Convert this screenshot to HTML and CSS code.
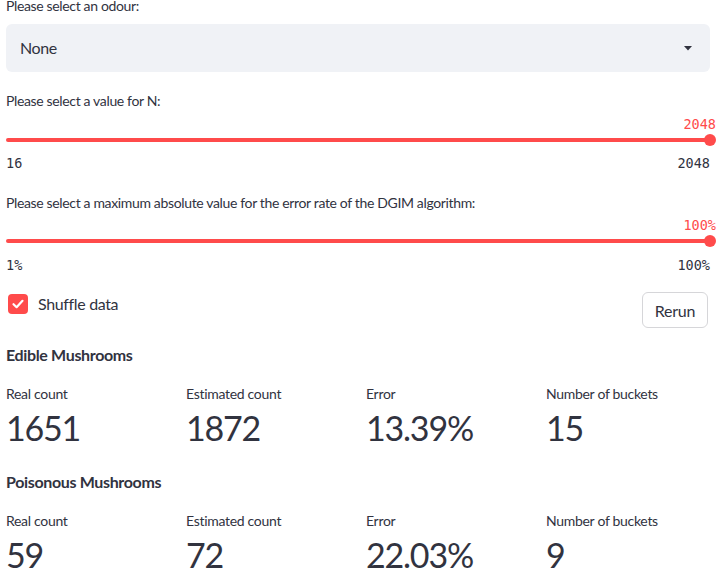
FILE: index.html
```html
<!DOCTYPE html>
<html>
<head>
<meta charset="utf-8">
<link rel="stylesheet" href="styles.css">
</head>
<body>
<main class="app">
  <div class="label first">Please select an odour:</div>
  <div class="select">
    <span class="select-value">None</span>
    <svg class="caret" width="8" height="5" viewBox="0 0 8 5"><path d="M0 0 L8 0 L4 4.5 Z" fill="#31333f"/></svg>
  </div>

  <div class="label gap18">Please select a value for N:</div>
  <div class="slider">
    <div class="slider-value">2048</div>
    <div class="track-area"><div class="track"></div><div class="thumb"></div></div>
    <div class="slider-range"><span>16</span><span>2048</span></div>
  </div>

  <div class="label gap19">Please select a maximum absolute value for the error rate of the DGIM algorithm:</div>
  <div class="slider s2">
    <div class="slider-value">100%</div>
    <div class="track-area"><div class="track"></div><div class="thumb"></div></div>
    <div class="slider-range"><span>1%</span><span>100%</span></div>
  </div>

  <div class="controls">
    <label class="checkbox">
      <span class="box"><svg width="14" height="14" viewBox="0 0 14 14"><path d="M2.5 7.2 L5.6 10.2 L11.5 3.8" fill="none" stroke="#fff" stroke-width="2.2" stroke-linecap="round" stroke-linejoin="round"/></svg></span>
      <span class="check-text">Shuffle data</span>
    </label>
    <button class="btn">Rerun</button>
  </div>

  <h4 class="heading">Edible Mushrooms</h4>
  <div class="metrics">
    <div class="metric"><div class="m-label">Real count</div><div class="m-value">1651</div></div>
    <div class="metric"><div class="m-label">Estimated count</div><div class="m-value">1872</div></div>
    <div class="metric"><div class="m-label">Error</div><div class="m-value">13.39%</div></div>
    <div class="metric"><div class="m-label">Number of buckets</div><div class="m-value">15</div></div>
  </div>

  <h4 class="heading h2">Poisonous Mushrooms</h4>
  <div class="metrics">
    <div class="metric"><div class="m-label">Real count</div><div class="m-value">59</div></div>
    <div class="metric"><div class="m-label">Estimated count</div><div class="m-value">72</div></div>
    <div class="metric"><div class="m-label">Error</div><div class="m-value">22.03%</div></div>
    <div class="metric"><div class="m-label">Number of buckets</div><div class="m-value">9</div></div>
  </div>
</main>
</body>
</html>
```
FILE: styles.css
```css
html, body {
  margin: 0;
  padding: 0;
  background: #ffffff;
  overflow: hidden;
}
body {
  font-family: Lato, "Noto Sans", sans-serif;
  color: #31333f;
}
.app {
  padding: 0 6px;
  width: 704px;
}
.label {
  font-size: 14px;
  line-height: 22px;
  height: 22px;
  white-space: nowrap;
  letter-spacing: -0.35px;
}
.label.first { margin-top: -5px; }
.gap18 { margin-top: 18px; }
.gap19 { margin-top: 19px; }

.select {
  margin-top: 7px;
  height: 48px;
  background: #f0f2f6;
  border-radius: 6px;
  display: flex;
  align-items: center;
  justify-content: space-between;
  padding: 0 18px 0 14px;
}
.select-value { font-size: 16px; letter-spacing: -0.4px; margin-top: -1px; }
.caret { margin-top: 0; }

.slider { position: relative; }
.slider-value {
  margin-top: 2px;
  height: 20px;
  line-height: 20px;
  text-align: right;
  margin-right: -6px;
  font-family: "DejaVu Sans Mono", monospace;
  font-size: 13.5px;
  color: #ff4b4b;
}
.track-area {
  position: relative;
  height: 12px;
}
.track {
  position: absolute;
  left: 0;
  right: 0;
  top: 4px;
  height: 4px;
  border-radius: 2px;
  background: #ff4b4b;
}
.thumb {
  position: absolute;
  right: -6px;
  top: 0;
  width: 12px;
  height: 12px;
  border-radius: 50%;
  background: #ff4b4b;
}
.slider-range {
  margin-top: 7px;
  height: 20px;
  line-height: 20px;
  display: flex;
  justify-content: space-between;
  font-family: "DejaVu Sans Mono", monospace;
  font-size: 13.5px;
}
.s2 .slider-value { margin-top: 1px; }
.s2 .slider-range { margin-top: 8px; }

.controls {
  margin-top: 17px;
  height: 36px;
  display: flex;
  justify-content: space-between;
  align-items: flex-start;
}
.checkbox {
  display: flex;
  align-items: center;
  margin-top: 2px;
  padding-left: 2px;
}
.box {
  width: 20px;
  height: 20px;
  border-radius: 4px;
  background: #ff4b4b;
  display: flex;
  align-items: center;
  justify-content: center;
}
.check-text {
  margin-left: 10px;
  font-size: 16px;
  line-height: 20px;
  letter-spacing: -0.35px;
}
.btn {
  width: 66px;
  height: 36px;
  margin-right: 2px;
  border: 1px solid #d6d6d9;
  border-radius: 6px;
  background: #ffffff;
  font-family: Lato, "Noto Sans", sans-serif;
  font-size: 16px;
  letter-spacing: -0.2px;
  color: #31333f;
  padding: 0;
}

.heading {
  margin: 15px 0 0;
  font-size: 16px;
  line-height: 24px;
  font-weight: 700;
  letter-spacing: -0.35px;
}
.heading.h2 { margin-top: 20px; }

.metrics {
  display: grid;
  grid-template-columns: repeat(4, 180px);
  margin-top: 17px;
}
.m-label {
  font-size: 14px;
  line-height: 20px;
  letter-spacing: -0.3px;
}
.m-value {
  margin-top: 2px;
  font-size: 34px;
  line-height: 44px;
  font-weight: 400;
  letter-spacing: -1.2px;
}
```
